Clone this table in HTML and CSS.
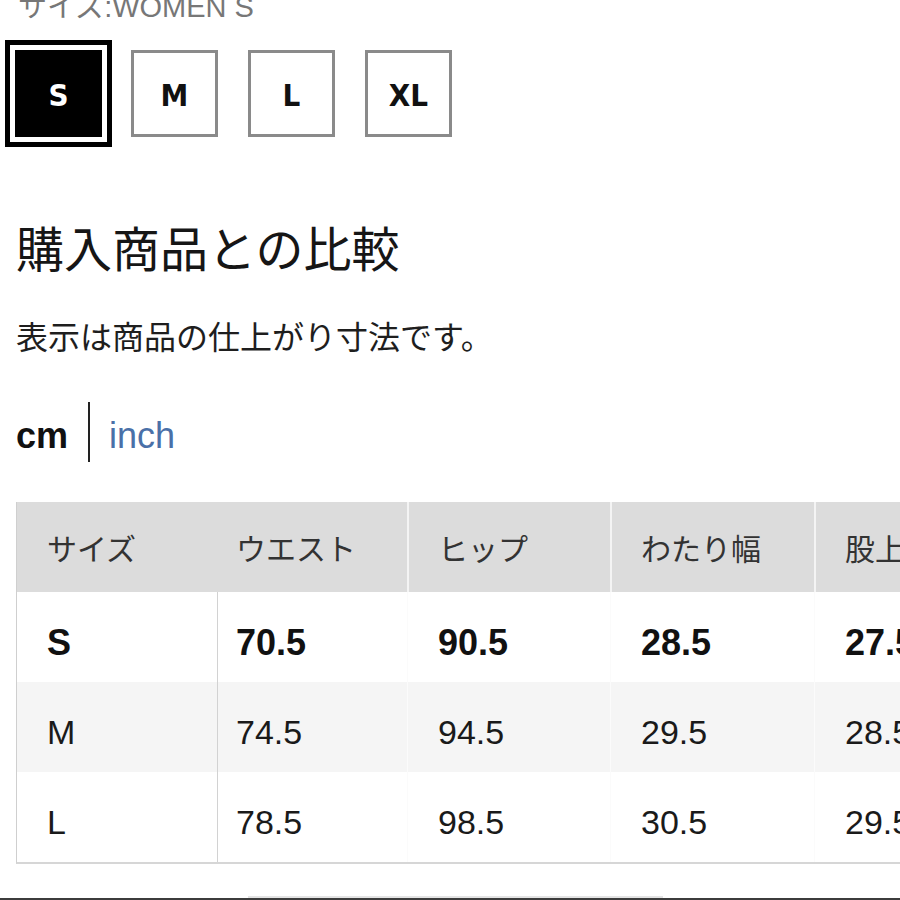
FILE: index.html
```html
<!DOCTYPE html>
<html lang="ja">
<head>
<meta charset="utf-8">
<title>サイズ比較</title>
<link rel="stylesheet" href="styles.css">
</head>
<body>
<div class="page">
  <div class="size-label">サイズ:WOMEN S</div>
  <div class="sizes">
    <div class="size-box selected">S</div>
    <div class="size-box">M</div>
    <div class="size-box">L</div>
    <div class="size-box">XL</div>
  </div>
  <h2 class="title">購入商品との比較</h2>
  <p class="note">表示は商品の仕上がり寸法です。</p>
  <div class="units">
    <span class="unit active">cm</span>
    <span class="unit-sep"></span>
    <span class="unit link">inch</span>
  </div>
  <div class="table">
    <div class="row head">
      <div class="cell c1">サイズ</div>
      <div class="cell c2">ウエスト</div>
      <div class="cell c3">ヒップ</div>
      <div class="cell c4">わたり幅</div>
      <div class="cell c5">股上</div>
    </div>
    <div class="row body current">
      <div class="cell c1">S</div>
      <div class="cell c2">70.5</div>
      <div class="cell c3">90.5</div>
      <div class="cell c4">28.5</div>
      <div class="cell c5">27.5</div>
    </div>
    <div class="row body alt">
      <div class="cell c1">M</div>
      <div class="cell c2">74.5</div>
      <div class="cell c3">94.5</div>
      <div class="cell c4">29.5</div>
      <div class="cell c5">28.5</div>
    </div>
    <div class="row body">
      <div class="cell c1">L</div>
      <div class="cell c2">78.5</div>
      <div class="cell c3">98.5</div>
      <div class="cell c4">30.5</div>
      <div class="cell c5">29.5</div>
    </div>
  </div>
</div>
<div class="scrollbar"><div class="thumb"></div><div class="track-line"></div></div>
</body>
</html>
```
FILE: styles.css
```css
html, body {
  margin: 0;
  padding: 0;
  background: #fff;
  overflow: hidden;
}
body {
  width: 900px;
  height: 900px;
  font-family: "Liberation Sans", "Noto Sans CJK JP", sans-serif;
  color: #111;
}
.page {
  padding-left: 16px;
  height: 896px;
  overflow: hidden;
}
.size-label {
  font-family: "Liberation Sans", "Noto Sans CJK JP", sans-serif;
  font-size: 29px;
  line-height: 28px;
  height: 28px;
  margin-top: -7px;
  color: #777;
  padding-left: 2px;
  white-space: nowrap;
}
.sizes {
  display: flex;
  gap: 30px;
  margin-top: 29px;
  margin-left: -1px;
}
.size-box {
  box-sizing: border-box;
  width: 87px;
  height: 87px;
  border: 3px solid #8a8a8a;
  display: flex;
  align-items: center;
  justify-content: center;
  font-family: "DejaVu Sans", "Liberation Sans", sans-serif;
  font-stretch: condensed;
  font-weight: 700;
  font-size: 31px;
  color: #111;
  padding-top: 2px;
}
.size-box.selected {
  background: #000;
  border-color: #000;
  color: #fff;
  outline: 5px solid #000;
  outline-offset: 5px;
  margin-right: -1px;
}
.title {
  margin: 79px 0 0;
  font-family: "Noto Sans CJK JP", sans-serif;
  font-weight: 400;
  font-size: 48px;
  line-height: 60px;
  color: #161616;
}
.note {
  margin: 39px 0 0;
  font-family: "Noto Sans CJK JP", sans-serif;
  font-weight: 400;
  font-size: 32px;
  line-height: 40px;
  color: #1e1e1e;
}
.units {
  display: flex;
  align-items: stretch;
  height: 60px;
  margin-top: 47px;
}
.unit {
  font-family: "Liberation Sans", sans-serif;
  font-size: 36px;
  line-height: 52px;
  padding-top: 8px;
}
.unit.active {
  font-weight: 700;
  color: #111;
}
.unit-sep {
  width: 2px;
  background: #222;
  margin: 0 19px 0 20px;
}
.unit.link {
  color: #4a70a8;
}
.table {
  margin-top: 40px;
  width: 1010px;
  border-left: 1px solid #cfcfcf;
  border-bottom: 2px solid #d6d6d6;
}
.row {
  display: grid;
  grid-template-columns: 200px 190px 203px 204px 213px;
  height: 90px;
}
.cell {
  box-sizing: border-box;
  display: flex;
  align-items: center;
  white-space: nowrap;
  overflow: hidden;
}
.c1 { padding-left: 30px; }
.c2 { padding-left: 19px; }
.c3 { padding-left: 31px; }
.c4 { padding-left: 31px; }
.c5 { padding-left: 31px; }
.head {
  background: #dcdcdc;
}
.head .cell {
  font-family: "Noto Sans CJK JP", sans-serif;
  font-size: 30px;
  color: #333;
}
.head .c3, .head .c4, .head .c5 {
  border-left: 2px solid #f4f4f4;
  padding-left: 29px;
}
.body .cell {
  font-family: "Liberation Sans", sans-serif;
  font-size: 34px;
  color: #1a1a1a;
  padding-top: 11px;
}
.body .c2 {
  border-left: 1px solid #d2d2d2;
  padding-left: 18px;
}
.body .c3, .body .c4, .body .c5 {
  border-left: 1px solid #fbfbfb;
  padding-left: 30px;
}
.current .cell {
  font-weight: 700;
  font-size: 36px;
  color: #111;
}
.alt {
  background: #f5f5f5;
}
.scrollbar {
  position: relative;
  height: 4px;
}
.thumb {
  margin-left: 248px;
  width: 415px;
  height: 2px;
  background: #e4e4e4;
}
.track-line {
  height: 2px;
  background: #3c3c3c;
}
```
